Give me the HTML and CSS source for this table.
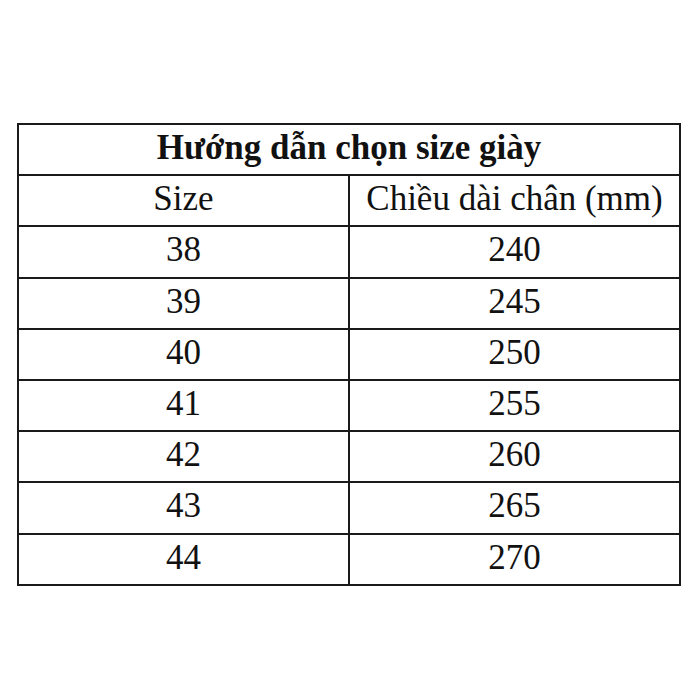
FILE: index.html
```html
<!DOCTYPE html>
<html lang="vi">
<head>
<meta charset="utf-8">
<link rel="stylesheet" href="styles.css">
</head>
<body>
<div class="page">
  <table class="size-table">
    <colgroup><col class="c1"><col class="c2"></colgroup>
    <tr><th colspan="2" class="title">Hướng dẫn chọn size giày</th></tr>
    <tr><td>Size</td><td>Chiều dài chân (mm)</td></tr>
    <tr><td>38</td><td>240</td></tr>
    <tr><td>39</td><td>245</td></tr>
    <tr><td>40</td><td>250</td></tr>
    <tr><td>41</td><td>255</td></tr>
    <tr><td>42</td><td>260</td></tr>
    <tr><td>43</td><td>265</td></tr>
    <tr><td>44</td><td>270</td></tr>
  </table>
</div>
</body>
</html>
```

FILE: styles.css
```css
html, body {
  margin: 0;
  padding: 0;
  background: #fff;
}
.page {
  padding: 123px 0 0 17px;
}
.size-table {
  border-collapse: collapse;
  table-layout: fixed;
  width: 662px;
  font-family: "Liberation Serif", "Times New Roman", serif;
  font-size: 35px;
  color: #111;
  border: 2px solid #1a1a1a;
}
.c1 { width: 331px; }
.c2 { width: 331px; }
.size-table tr {
  height: 51.2px;
}
.size-table td,
.size-table th {
  border: 2px solid #1a1a1a;
  text-align: center;
  vertical-align: middle;
  padding: 0 0 4px 0;
  line-height: 1;
}
.size-table .title {
  font-weight: bold;
}
```
